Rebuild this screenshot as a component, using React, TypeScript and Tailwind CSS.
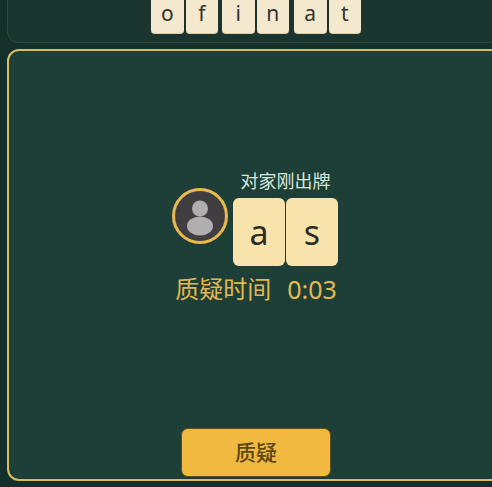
import React from "react";

const handTiles = [
  { letter: "o", gap: "mr-[2px]" },
  { letter: "f", gap: "mr-[4px]" },
  { letter: "i", gap: "mr-[2px]" },
  { letter: "n", gap: "mr-[5px]" },
  { letter: "a", gap: "mr-[2px]" },
  { letter: "t", gap: "" },
];

const font = "font-['Noto_Sans','Noto_Sans_CJK_SC',sans-serif]";

const App: React.FC = () => {
  return (
    <div className={`w-[492px] h-[487px] overflow-hidden bg-[#14302a] ${font}`}>
      <div className="w-[498px] ml-[7px]">
        <div className="h-[43px] flex justify-center items-end pb-[8px] bg-[#1a352e] border border-t-0 border-[#2c4a41] rounded-b-[12px]">
          {handTiles.map((t, i) => (
            <div
              key={i}
              className={`w-[32.5px] h-[40px] flex items-center justify-center bg-[#f4e9cf] rounded-[4px] border-b border-[#d8cbaa] text-[#33332c] text-[21px] leading-none ${t.gap}`}
            >
              {t.letter}
            </div>
          ))}
        </div>

        <div className="relative mt-[6px] h-[432px] flex flex-col items-center bg-[#1e3f37] border-2 border-[#dcbb5c] rounded-[12px]">
          <div className="flex items-start mt-[118px] -ml-[2px]">
            <div className="w-[56px] h-[56px] mt-[19px] mr-[5px] rounded-full border-[3px] border-[#e8b94e] bg-[#413e42] flex items-center justify-center">
              <svg width="34" height="40" viewBox="0 0 34 40">
                <circle cx="17" cy="12.5" r="8" fill="#b1aeb0" />
                <ellipse cx="17" cy="30" rx="13" ry="9.5" fill="#b1aeb0" />
              </svg>
            </div>
            <div className="flex flex-col items-center">
              <div className="text-[18px] leading-[24px] text-[#d7e6da] mb-[5px]">对家刚出牌</div>
              <div className="flex">
                <div className="w-[52px] h-[68px] flex items-center justify-center bg-[#f7e3ab] rounded-[6px] text-[#2c2e26] text-[34px] leading-none mr-[1px]">a</div>
                <div className="w-[52px] h-[68px] flex items-center justify-center bg-[#f7e3ab] rounded-[6px] text-[#2c2e26] text-[34px] leading-none">s</div>
              </div>
            </div>
          </div>
          <div className="flex items-center mt-[7px] text-[#e3b94f] leading-[32px]">
            <span className="text-[24px]">质疑时间</span>
            <span className="ml-[16px] text-[25px]">0:03</span>
          </div>
          <button className="absolute bottom-[2px] left-[172px] w-[150px] h-[49px] bg-[#f2b940] rounded-[7px] border border-[#5e4f20] text-[#5a4610] text-[21px] font-medium">
            质疑
          </button>
        </div>
      </div>
    </div>
  );
};

export default App;
